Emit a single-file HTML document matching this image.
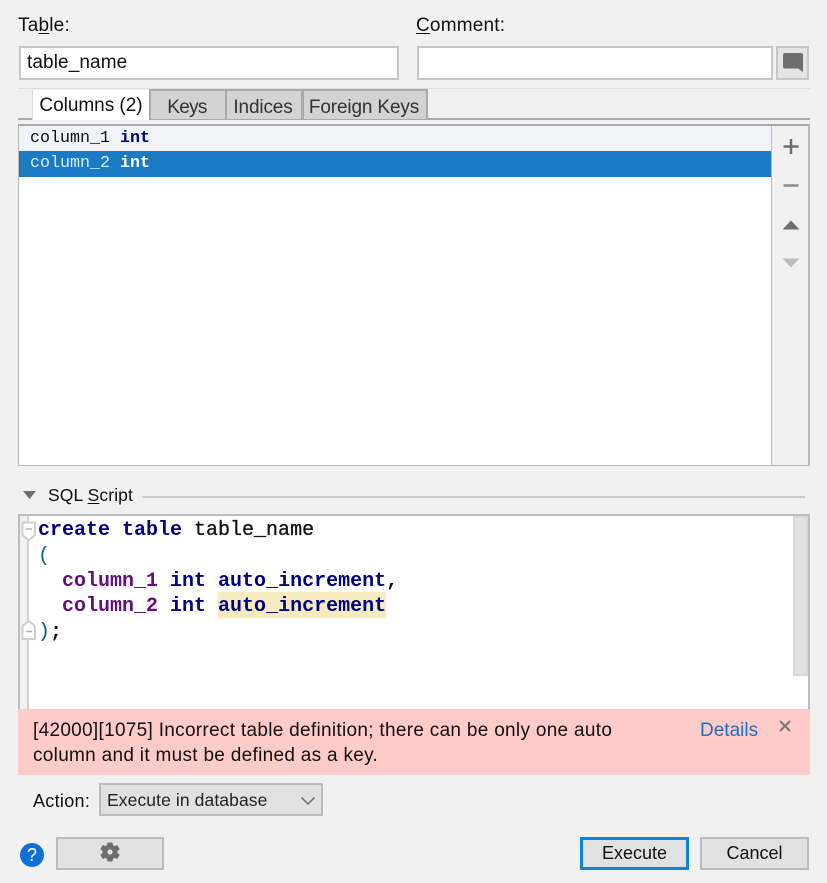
<!DOCTYPE html>
<html><head><meta charset="utf-8">
<style>
html,body{margin:0;padding:0}
body{width:827px;height:883px;background:#f1f1f1;position:relative;overflow:hidden;font-family:"Liberation Sans",sans-serif;color:#111}
.a{position:absolute;box-sizing:border-box}
.t{position:absolute;white-space:nowrap;font-size:18px;line-height:24px}
.m{position:absolute;white-space:pre;font-family:"Liberation Mono",monospace}
.box{position:absolute;box-sizing:border-box;border:2px solid #c6c6c6;background:#fff}
.btn{position:absolute;box-sizing:border-box;border:2px solid #bbb;background:#e1e1e1}
.tab{position:absolute;box-sizing:border-box;top:89px;height:30px;border:2px solid #a9a9a9;border-bottom:none;background:#d3d3d3;font-size:19px;line-height:33px;text-align:center;color:#333;white-space:nowrap}
u{text-underline-offset:2px}
.k{color:#000080;font-weight:bold}
.p{color:#660e7a;font-weight:bold}
</style></head><body>
<div class="t" style="left:18px;top:14px;font-size:19px;letter-spacing:.2px">Ta<u>b</u>le:</div>
<div class="t" style="left:416px;top:14px;font-size:19px;letter-spacing:.2px"><u>C</u>omment:</div>
<div class="box" style="left:19px;top:46px;width:380px;height:34px"></div>
<div class="t" style="left:27px;top:51px;font-size:19px;letter-spacing:.1px">table_name</div>
<div class="box" style="left:417px;top:46px;width:356px;height:34px"></div>
<div class="btn" style="left:776px;top:46px;width:33px;height:34px;border-color:#c6c6c6;background:#e4e4e4"></div>
<svg class="a" style="left:782px;top:52px" width="22" height="22"><path d="M3 1H19Q21 1 21 3V20L16 16.500H3Q1 16.500 1 14.500V3Q1 1 3 1Z" fill="#6e6e6e"/></svg>

<div class="a" style="left:18px;top:88px;width:792px;height:1px;background:#dedede"></div>
<div class="a" style="left:18px;top:118px;width:792px;height:2px;background:#a9a9a9"></div>
<div class="tab" style="left:32px;top:90px;width:117px;height:30px;background:#fff;border:none;border-left:1px solid #dcdcdc;line-height:32px;letter-spacing:-.03px;color:#111;z-index:2">Columns (2)</div>
<div class="tab" style="left:149px;width:78px;letter-spacing:-.7px;padding-right:2px">Keys</div>
<div class="tab" style="left:225px;width:78px;letter-spacing:-.15px;padding-right:2px">Indices</div>
<div class="tab" style="left:302px;width:126px;letter-spacing:-.15px;padding-right:2px">Foreign Keys</div>

<div class="box" style="left:18px;top:124px;width:792px;height:342px;border-width:1px 2px 1px 1px;border-color:#b9b9b9;border-top:2px solid #a9a9a9"></div>
<div class="a" style="left:19px;top:126px;width:752px;height:25px;background:#f0f3f9"></div>
<div class="a" style="left:19px;top:151px;width:752px;height:26px;background:#1a7bc4"></div>
<div class="m" style="left:30px;top:127px;font-size:16.67px;line-height:24px;color:#111">column_1 <span class="k">int</span></div>
<div class="m" style="left:30px;top:152px;font-size:16.67px;line-height:24px;color:#dcecf8">column_2 <span style="color:#fff;font-weight:bold">int</span></div>
<div class="a" style="left:771px;top:126px;width:37px;height:339px;background:#f1f1f1;border-left:1px solid #bdbdbd"></div>
<svg class="a" style="left:771px;top:126px" width="39" height="150">
<path d="M20 13V28M12.500 20.500H27.500" stroke="#6e6e6e" stroke-width="2.500" fill="none"/>
<path d="M12.500 59.500H27.500" stroke="#8a8a8a" stroke-width="2.500" fill="none"/>
<path d="M11.500 103.500L20 94.500L28.500 103.500Z" fill="#6e6e6e"/>
<path d="M11.500 132.500H28.500L20 141.500Z" fill="#bdbdbd"/>
</svg>

<svg class="a" style="left:22px;top:490px" width="16" height="10"><path d="M1 1H14L7.500 9Z" fill="#6e6e6e"/></svg>
<div class="t" style="left:48px;top:483px;font-size:17.500px;letter-spacing:.1px">SQL <u>S</u>cript</div>
<div class="a" style="left:142px;top:496px;width:663px;height:2px;background:#cbcbcb"></div>

<div class="box" style="left:18px;top:514px;width:792px;height:196px;border-color:#bdbdbd;border-bottom-width:1px"></div>
<div class="a" style="left:20px;top:516px;width:9px;height:193px;background:#f1f1f1;border-right:2px solid #d3d3d3"></div>
<svg class="a" style="left:20px;top:518px" width="18" height="130">
<path d="M2.500 4.500H15V17L8.750 22L2.500 17Z" fill="#fff" stroke="#d0d0d0" stroke-width="2"/>
<path d="M6 11H12" stroke="#b5b5b5" stroke-width="1.500"/>
<path d="M2.500 121V108L8.750 103L15 108V121Z" fill="#fff" stroke="#d0d0d0" stroke-width="2"/>
<path d="M6 113.500H12" stroke="#b5b5b5" stroke-width="1.500"/>
</svg>
<div class="a" style="left:793px;top:516px;width:15px;height:160px;background:#e1e1e1;border:2px solid #d9d9d9"></div>
<div class="a" style="left:218px;top:592px;width:168px;height:26px;background:#f6ebbf"></div>
<div class="m" style="left:38px;top:518px;font-size:20px;line-height:25.500px;color:#111;font-weight:bold"><span class="k">create table</span> <span style="font-weight:normal;-webkit-text-stroke:.3px #111">table_name</span>
<span style="font-weight:normal;color:#00627a">(</span>
  <span class="p">column_1</span> <span class="k">int auto_increment</span>,
<span style="position:relative;top:-1px">  <span class="p">column_2</span> <span class="k">int auto_increment</span></span>
<span style="color:#00627a;font-weight:normal">)</span>;</div>

<div class="a" style="left:18px;top:709px;width:792px;height:66px;background:#ffcbc9"></div>
<div class="t" style="left:33px;top:718px;line-height:25px;font-size:19px;letter-spacing:.3px">[42000][1075] Incorrect table definition; there can be only one auto<br>column and it must be defined as a key.</div>
<div class="t" style="left:700px;top:718px;line-height:25px;font-size:19px;color:#1b6fc8">Details</div>
<svg class="a" style="left:779px;top:720px" width="12" height="12"><path d="M1 1L11 11M11 1L1 11" stroke="#777" stroke-width="2"/></svg>

<div class="t" style="left:33px;top:789px;font-size:18px;letter-spacing:.3px">Action:</div>
<div class="btn" style="left:99px;top:783px;width:224px;height:33px"></div>
<div class="t" style="left:107px;top:788px;font-size:17.500px;letter-spacing:.1px;color:#222">Execute in database</div>
<svg class="a" style="left:300px;top:796px" width="16" height="10"><path d="M1.500 1.500L8 8L14.500 1.500" stroke="#6a6a6a" stroke-width="1.500" fill="none"/></svg>

<svg class="a" style="left:20px;top:843px" width="25" height="25"><circle cx="12" cy="12" r="12" fill="#0f6fd6"/></svg>
<div class="t" style="left:20px;top:843px;width:24px;text-align:center;color:#fff;font-size:18px;line-height:25px">?</div>
<div class="btn" style="left:56px;top:837px;width:108px;height:33px"></div>
<svg class="a" style="left:100px;top:842px" width="20" height="20" viewBox="0 0 20 20"><path fill="#6e6e6e" fill-rule="evenodd" d="M7.500 .5H12.500L13 3.200L14.500 4L17.200 3L19.700 7.300L17.500 9V11L19.700 12.700L17.200 17L14.500 16L13 16.800L12.500 19.500H7.500L7 16.800L5.500 16L2.800 17L.3 12.700L2.500 11V9L.3 7.300L2.800 3L5.500 4L7 3.200ZM10 7.400A2.600 2.600 0 1 0 10 12.600A2.600 2.600 0 1 0 10 7.400Z"/></svg>
<div class="btn" style="left:580px;top:837px;width:109px;height:33px;border:3px solid #0f82dc"></div>
<div class="t" style="left:580px;top:841px;width:109px;text-align:center">Execute</div>
<div class="btn" style="left:700px;top:837px;width:109px;height:33px"></div>
<div class="t" style="left:700px;top:841px;width:109px;text-align:center">Cancel</div>
</body></html>
